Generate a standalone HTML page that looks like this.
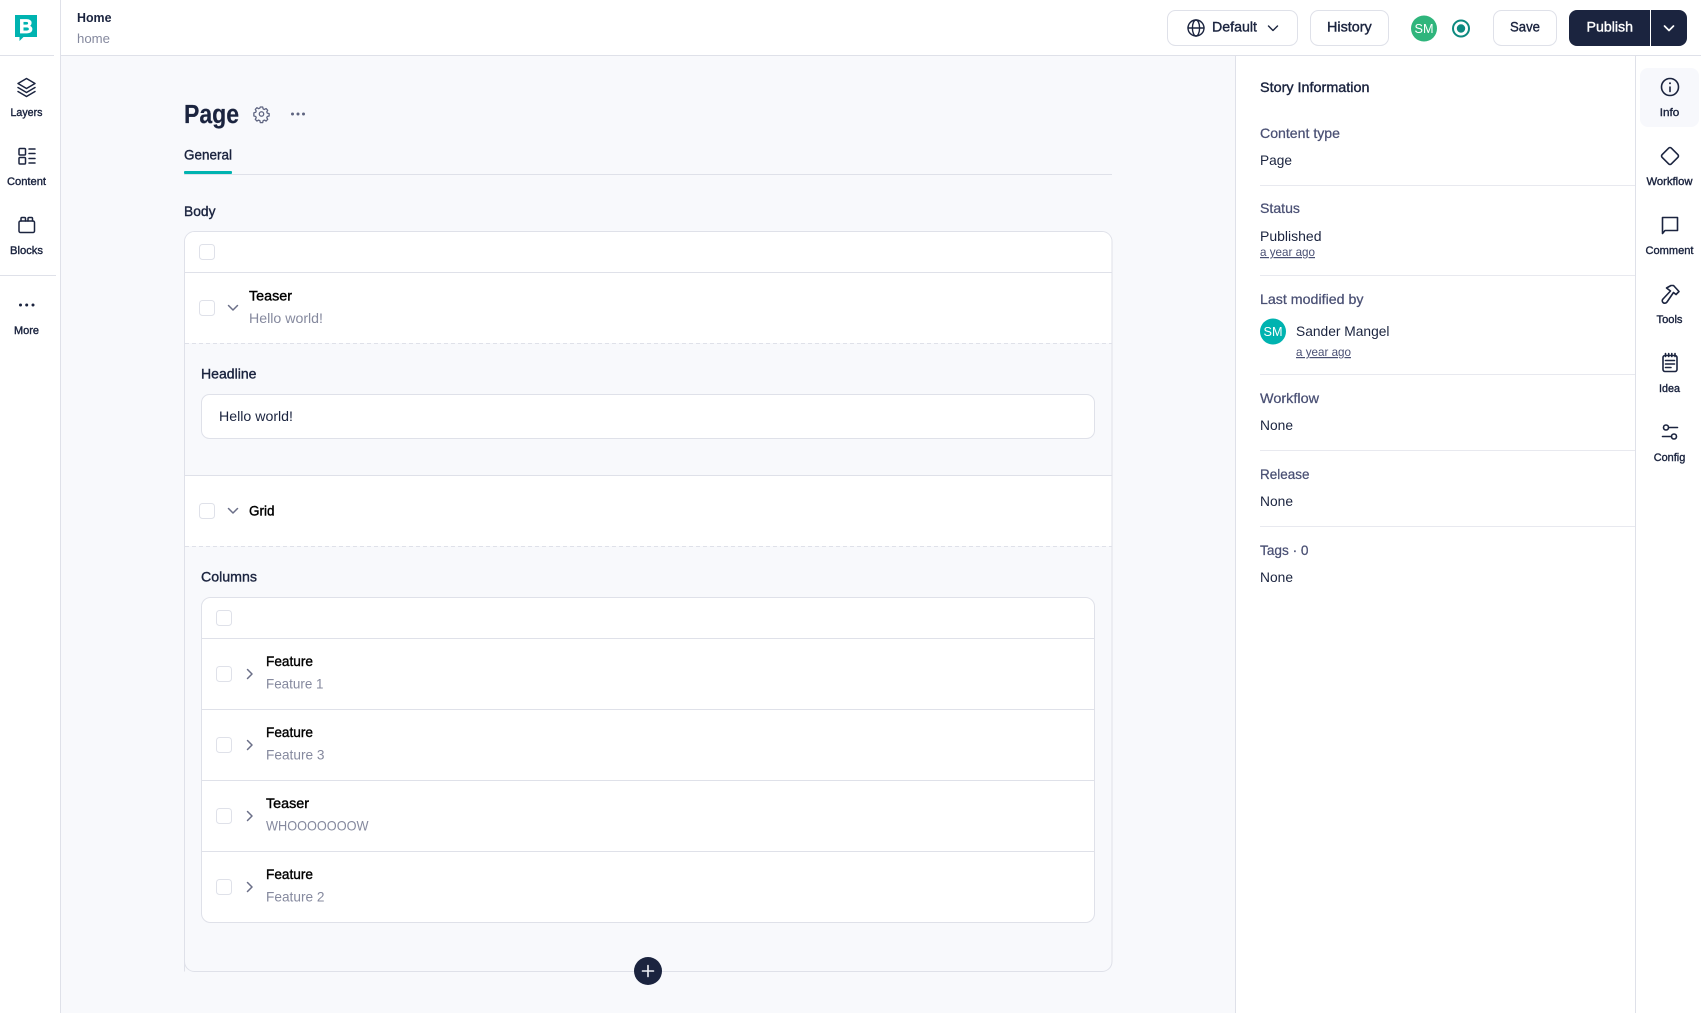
<!DOCTYPE html>
<html lang="en">
<head>
<meta charset="utf-8">
<title>Home</title>
<style>
html,body{margin:0;padding:0;background:#fff;overflow:hidden}
svg{display:block}
text{font-family:"Liberation Sans",Arial,sans-serif;white-space:pre}
.m{stroke:currentColor;stroke-width:.38px}
.t14{font-size:14px}
.t11{font-size:11px;fill:#1b243f;color:#1b243f;text-anchor:middle}
.lab{font-size:14px;fill:#4a5074;color:#4a5074;stroke:#4a5074;stroke-width:.25px}
.val{font-size:14px;fill:#1b243f}
.ttl{font-size:14px;fill:#000;color:#000}
.sub{font-size:14px;fill:#85899e}
.dk{fill:#1b243f;color:#1b243f}
.ic{fill:none;stroke:#1b243f;stroke-width:1.6;stroke-linecap:round;stroke-linejoin:round}
.gr{fill:none;stroke:#6b6f88;stroke-width:1.5;stroke-linecap:round;stroke-linejoin:round}
.cb{fill:#fff;stroke:#dfe1e9;stroke-width:1}
.ln{stroke:#dfe1e9;stroke-width:1}
</style>
</head>
<body>
<svg xmlns="http://www.w3.org/2000/svg" width="1701" height="1013" viewBox="0 0 1701 1013">
<rect width="1701" height="1013" fill="#fff"/>
<!-- main background -->
<rect x="60" y="55" width="1176" height="958" fill="#f8f9fc"/>
<!-- header -->
<line x1="60" y1="55.5" x2="1701" y2="55.5" class="ln"/>
<line x1="60.5" y1="0" x2="60.5" y2="1013" class="ln"/>
<line x1="0" y1="55.5" x2="54" y2="55.5" class="ln"/>
<line x1="0" y1="275.5" x2="56" y2="275.5" class="ln"/>
<!-- logo -->
<path d="M15 15H37V37H23.5L19.5 41V37H15Z" fill="#00b3b0"/>
<text x="26" y="33" font-size="19" font-weight="700" fill="#fff" stroke="#fff" stroke-width=".7" text-anchor="middle">B</text>

<text x="77" y="22" font-size="13" font-weight="700" fill="#1b243f" textLength="34.5" lengthAdjust="spacingAndGlyphs">Home</text>
<text x="77" y="43" font-size="13" fill="#85899e" textLength="33" lengthAdjust="spacingAndGlyphs">home</text>

<!-- left nav -->
<g class="ic" style="stroke-width:1.5">
<path d="M26.5 78.5L35 83.5L26.5 88.5L18 83.5Z"/>
<path d="M18 87.5L26.5 92.5L35 87.5"/>
<path d="M18 91.5L26.5 96.5L35 91.5"/>
<rect x="19" y="148.5" width="6.5" height="6.5" rx="1"/>
<rect x="19" y="157.5" width="6.5" height="6.5" rx="1"/>
<path d="M29 149H35M29 153.5H35M29 158.500H35M29 163H35"/>
<path d="M19 222.500a1.500 1.500 0 0 1 1.500-1.500H33a1.500 1.500 0 0 1 1.500 1.500V231a1.500 1.500 0 0 1-1.500 1.500H20.500a1.500 1.500 0 0 1-1.500-1.500Z"/>
<path d="M21 221v-2.500a1 1 0 0 1 1-1h2.500a1 1 0 0 1 1 1V221M28 221v-2.500a1 1 0 0 1 1-1h2.500a1 1 0 0 1 1 1V221"/>
</g>
<circle cx="20.500" cy="305" r="1.500" fill="#1b243f"/><circle cx="26.700" cy="305" r="1.500" fill="#1b243f"/><circle cx="33" cy="305" r="1.500" fill="#1b243f"/>
<text x="26.500" y="116" class="t11 m" textLength="32" lengthAdjust="spacingAndGlyphs">Layers</text>
<text x="26.500" y="185" class="t11 m" textLength="39" lengthAdjust="spacingAndGlyphs">Content</text>
<text x="26.500" y="254" class="t11 m" textLength="33" lengthAdjust="spacingAndGlyphs">Blocks</text>
<text x="26.500" y="334" class="t11 m" textLength="25" lengthAdjust="spacingAndGlyphs">More</text>

<!-- top actions -->
<rect x="1167.500" y="10.500" width="130" height="35" rx="8" fill="#fff" stroke="#dfe1e9"/>
<g class="ic" style="stroke-width:1.4">
<circle cx="1196" cy="28" r="8"/>
<ellipse cx="1196" cy="28" rx="3.600" ry="8"/>
<path d="M1188 28H1204"/>
<path d="M1268.500 26L1273 30.500L1277.500 26"/>
</g>
<text x="1212" y="31.500" class="t14 dk m" textLength="45" lengthAdjust="spacingAndGlyphs">Default</text>
<rect x="1310.500" y="10.500" width="78" height="35" rx="8" fill="#fff" stroke="#dfe1e9"/>
<text x="1327" y="31.500" class="t14 dk m" textLength="44.700" lengthAdjust="spacingAndGlyphs">History</text>
<circle cx="1424" cy="28.500" r="13" fill="#2fb57c"/>
<text x="1424" y="33" font-size="13" fill="#fff" text-anchor="middle" textLength="19" lengthAdjust="spacingAndGlyphs">SM</text>
<circle cx="1461" cy="28.500" r="8" fill="none" stroke="#0d8a80" stroke-width="2"/>
<circle cx="1461" cy="28.500" r="4.200" fill="#0d8a80"/>
<rect x="1493.500" y="10.500" width="63" height="35" rx="8" fill="#fff" stroke="#dfe1e9"/>
<text x="1510" y="31.500" class="t14 dk m" textLength="30" lengthAdjust="spacingAndGlyphs">Save</text>
<rect x="1569" y="10" width="118" height="36" rx="8" fill="#1b243f"/>
<rect x="1650" y="10" width="1" height="36" fill="#fff"/>
<text x="1586.500" y="31.500" font-size="14" fill="#fff" color="#fff" class="m" textLength="46.500" lengthAdjust="spacingAndGlyphs">Publish</text>
<path d="M1664.500 26L1669 30.500L1673.500 26" fill="none" stroke="#fff" stroke-width="1.700" stroke-linecap="round" stroke-linejoin="round"/>

<!-- page heading -->
<text x="184" y="123" font-size="25.500" font-weight="700" fill="#1b243f" stroke="#1b243f" stroke-width=".2" textLength="55" lengthAdjust="spacingAndGlyphs">Page</text>
<g transform="translate(261.500 114) scale(.85) translate(-8.500 -9)" fill="none" stroke="#5e6480" stroke-width="1.500" stroke-linejoin="round">
<path d="M6.600 1h2.800l.5 2.200 1.500.7 2-1.100 1.900 2-1.100 1.900.6 1.500 2.200.6v2.700l-2.200.6-.6 1.500 1.100 1.900-1.900 2-2-1.100-1.500.7-.5 2.200H6.600l-.5-2.200-1.500-.7-2 1.100-1.900-2 1.100-1.900-.6-1.500-2.200-.6V7.800l2.200-.6.600-1.500-1.100-1.900 1.900-2 2 1.100 1.500-.7Z" transform="translate(.5 -.2)"/>
<circle cx="8.500" cy="9" r="2.600"/>
</g>
<circle cx="292.500" cy="114" r="1.500" fill="#5e6480"/><circle cx="298" cy="114" r="1.500" fill="#5e6480"/><circle cx="303.500" cy="114" r="1.500" fill="#5e6480"/>
<text x="184" y="159.500" class="t14 dk m" textLength="48" lengthAdjust="spacingAndGlyphs">General</text>
<line x1="184" y1="174.500" x2="1112" y2="174.500" class="ln"/>
<rect x="184" y="171" width="48" height="3" rx="1" fill="#00b3b0"/>
<text x="184" y="216" class="t14 dk m" textLength="31.500" lengthAdjust="spacingAndGlyphs">Body</text>

<!-- outer box -->
<path d="M184.500 971.500V241.500a10 10 0 0 1 10-10H1102a10 10 0 0 1 10 10V961.500a10 10 0 0 1-10 10H194.500a10 10 0 0 1-10-10Z" fill="#f8f9fc" stroke="#dfe1e9"/>
<path d="M185 241.500a9.500 9.500 0 0 1 9.500-9.500H1102a9.500 9.500 0 0 1 9.500 9.500V343H185Z" fill="#fff"/>
<rect x="185" y="476" width="926.500" height="70" fill="#fff"/>
<line x1="185" y1="272.500" x2="1112" y2="272.500" class="ln"/>
<line x1="185" y1="343.500" x2="1112" y2="343.500" stroke="#dfe1e9" stroke-dasharray="4 3"/>
<line x1="185" y1="475.500" x2="1112" y2="475.500" class="ln"/>
<line x1="185" y1="546.500" x2="1112" y2="546.500" stroke="#dfe1e9" stroke-dasharray="4 3"/>

<rect x="199.500" y="244.500" width="15" height="15" rx="3" class="cb"/>
<rect x="199.500" y="300.500" width="15" height="15" rx="3" class="cb"/>
<path d="M228.500 305.500L233 310L237.500 305.500" class="gr"/>
<text x="249" y="300.500" class="ttl m" textLength="43" lengthAdjust="spacingAndGlyphs">Teaser</text>
<text x="249" y="323" class="sub" textLength="74" lengthAdjust="spacingAndGlyphs">Hello world!</text>

<text x="201" y="378.500" class="t14 dk m" textLength="55.500" lengthAdjust="spacingAndGlyphs">Headline</text>
<rect x="201.500" y="394.500" width="893" height="44" rx="8" fill="#fff" stroke="#dfe1e9"/>
<text x="219" y="421" class="val" textLength="74" lengthAdjust="spacingAndGlyphs">Hello world!</text>

<rect x="199.500" y="503.500" width="15" height="15" rx="3" class="cb"/>
<path d="M228.500 508.500L233 513L237.500 508.500" class="gr"/>
<text x="249" y="515.500" class="ttl m" textLength="25.500" lengthAdjust="spacingAndGlyphs">Grid</text>

<text x="201" y="581.500" class="t14 dk m" textLength="56" lengthAdjust="spacingAndGlyphs">Columns</text>
<rect x="201.500" y="597.500" width="893" height="325" rx="9" fill="#fff" stroke="#dfe1e9"/>
<line x1="202" y1="638.500" x2="1095" y2="638.500" class="ln"/>
<line x1="202" y1="709.500" x2="1095" y2="709.500" class="ln"/>
<line x1="202" y1="780.500" x2="1095" y2="780.500" class="ln"/>
<line x1="202" y1="851.500" x2="1095" y2="851.500" class="ln"/>
<rect x="216.500" y="610.500" width="15" height="15" rx="3" class="cb"/>

<rect x="216.500" y="666.500" width="15" height="15" rx="3" class="cb"/>
<path d="M247.500 669.500L252 674L247.500 678.500" class="gr"/>
<text x="266" y="666" class="ttl m" textLength="47" lengthAdjust="spacingAndGlyphs">Feature</text>
<text x="266" y="688.500" class="sub" textLength="57.500" lengthAdjust="spacingAndGlyphs">Feature 1</text>

<rect x="216.500" y="737.500" width="15" height="15" rx="3" class="cb"/>
<path d="M247.500 740.500L252 745L247.500 749.500" class="gr"/>
<text x="266" y="737" class="ttl m" textLength="47" lengthAdjust="spacingAndGlyphs">Feature</text>
<text x="266" y="759.500" class="sub" textLength="58.500" lengthAdjust="spacingAndGlyphs">Feature 3</text>

<rect x="216.500" y="808.500" width="15" height="15" rx="3" class="cb"/>
<path d="M247.500 811.500L252 816L247.500 820.500" class="gr"/>
<text x="266" y="808" class="ttl m" textLength="43" lengthAdjust="spacingAndGlyphs">Teaser</text>
<text x="266" y="830.500" class="sub" textLength="102.500" lengthAdjust="spacingAndGlyphs">WHOOOOOOOW</text>

<rect x="216.500" y="879.500" width="15" height="15" rx="3" class="cb"/>
<path d="M247.500 882.500L252 887L247.500 891.500" class="gr"/>
<text x="266" y="879" class="ttl m" textLength="47" lengthAdjust="spacingAndGlyphs">Feature</text>
<text x="266" y="901.500" class="sub" textLength="58.500" lengthAdjust="spacingAndGlyphs">Feature 2</text>

<circle cx="648" cy="971" r="14" fill="#1b243f"/>
<path d="M648 965.500V976.500M642.500 971H653.500" stroke="#eef0f6" stroke-width="1.600" stroke-linecap="round"/>

<!-- right panel -->
<rect x="1236" y="56" width="465" height="957" fill="#fff"/>
<line x1="1235.500" y1="55" x2="1235.500" y2="1013" class="ln"/>
<line x1="1635.500" y1="55" x2="1635.500" y2="1013" class="ln"/>
<g stroke="#e8e9ef" stroke-width="1">
<line x1="1260" y1="185.500" x2="1635" y2="185.500"/>
<line x1="1260" y1="275.500" x2="1635" y2="275.500"/>
<line x1="1260" y1="374.500" x2="1635" y2="374.500"/>
<line x1="1260" y1="450.500" x2="1635" y2="450.500"/>
<line x1="1260" y1="526.500" x2="1635" y2="526.500"/>
</g>
<text x="1260" y="92" class="t14 dk m" textLength="109.500" lengthAdjust="spacingAndGlyphs">Story Information</text>
<text x="1260" y="138" class="lab" textLength="80" lengthAdjust="spacingAndGlyphs">Content type</text>
<text x="1260" y="165" class="val" textLength="32" lengthAdjust="spacingAndGlyphs">Page</text>
<text x="1260" y="213" class="lab" textLength="40" lengthAdjust="spacingAndGlyphs">Status</text>
<text x="1260" y="241" class="val" textLength="61.500" lengthAdjust="spacingAndGlyphs">Published</text>
<text x="1260" y="256" font-size="12" fill="#4a5074" text-decoration="underline" textLength="55" lengthAdjust="spacingAndGlyphs">a year ago</text>
<text x="1260" y="304" class="lab" textLength="103.500" lengthAdjust="spacingAndGlyphs">Last modified by</text>
<circle cx="1273" cy="331.500" r="13" fill="#00b3b0"/>
<text x="1273" y="336" font-size="13" fill="#fff" text-anchor="middle" textLength="19" lengthAdjust="spacingAndGlyphs">SM</text>
<text x="1296" y="336" class="val" textLength="93.500" lengthAdjust="spacingAndGlyphs">Sander Mangel</text>
<text x="1296" y="356" font-size="12" fill="#4a5074" text-decoration="underline" textLength="55" lengthAdjust="spacingAndGlyphs">a year ago</text>
<text x="1260" y="403" class="lab" textLength="59" lengthAdjust="spacingAndGlyphs">Workflow</text>
<text x="1260" y="430" class="val" textLength="33" lengthAdjust="spacingAndGlyphs">None</text>
<text x="1260" y="479" class="lab" textLength="49.500" lengthAdjust="spacingAndGlyphs">Release</text>
<text x="1260" y="506" class="val" textLength="33" lengthAdjust="spacingAndGlyphs">None</text>
<text x="1260" y="555" class="lab" textLength="48.500" lengthAdjust="spacingAndGlyphs">Tags · 0</text>
<text x="1260" y="582" class="val" textLength="33" lengthAdjust="spacingAndGlyphs">None</text>

<!-- right rail -->
<rect x="1640" y="68" width="59" height="59" rx="8" fill="#f7f8fc"/>
<g class="ic">
<circle cx="1670" cy="87" r="8.500"/>
<path d="M1670 87V91.500"/>
<path d="M1670 83.200V83.300" style="stroke-width:2"/>
<rect x="1663.500" y="149.500" width="13" height="13" rx="1.800" transform="rotate(45 1670 156)"/>
<path d="M1662.500 217.500H1677.500V230.500H1665L1662.500 233.500Z"/>
<path d="M1666.500 288L1671 285.500H1673.500L1679 291.500L1676 294.500L1673.500 292.500L1667 302C1666 303.500 1664 303.500 1663 302.500C1662 301.500 1662 300 1663 299L1670.500 291Z"/>
<rect x="1663" y="355.500" width="14" height="16" rx="2"/>
<path d="M1665.500 353.500V356.500M1668.700 353.500V356.500M1671.800 353.500V356.500M1675 353.500V356.500M1665.500 360.500H1674.500M1665.500 364H1674.500M1665.500 367.500H1671"/>
<circle cx="1666" cy="427.500" r="2.500"/>
<path d="M1669 427.500H1677.500"/>
<circle cx="1674" cy="436.500" r="2.500"/>
<path d="M1662.500 436.500H1671"/>
</g>
<text x="1669.500" y="116" class="t11 m" textLength="19.500" lengthAdjust="spacingAndGlyphs">Info</text>
<text x="1669.500" y="185" class="t11 m" textLength="46" lengthAdjust="spacingAndGlyphs">Workflow</text>
<text x="1669.500" y="254" class="t11 m" textLength="48" lengthAdjust="spacingAndGlyphs">Comment</text>
<text x="1669.500" y="323" class="t11 m" textLength="26" lengthAdjust="spacingAndGlyphs">Tools</text>
<text x="1669.500" y="392" class="t11 m" textLength="21" lengthAdjust="spacingAndGlyphs">Idea</text>
<text x="1669.500" y="461" class="t11 m" textLength="31.500" lengthAdjust="spacingAndGlyphs">Config</text>
</svg>
</body>
</html>
